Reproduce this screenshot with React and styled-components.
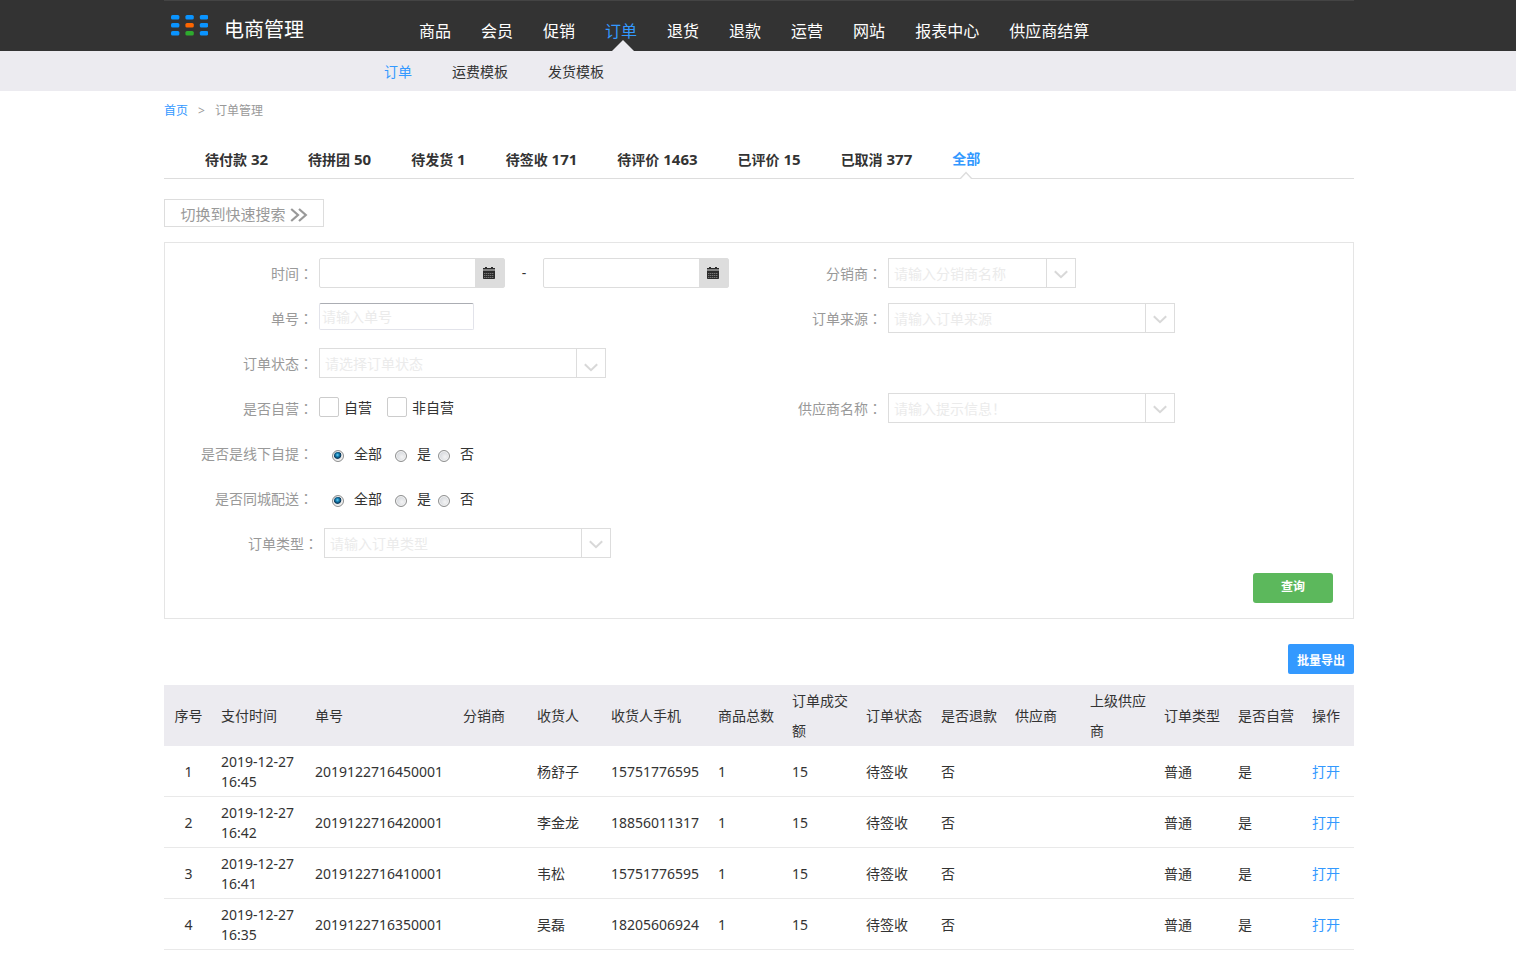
import React from "react";
import styled, { createGlobalStyle } from "styled-components";

const BLUE = "#3399ff";
const LINE = "#dddddd";

const GlobalStyle = createGlobalStyle`
  * { box-sizing: border-box; }
  body {
    margin: 0;
    background: #fff;
    color: #333;
    font-family: "Noto Sans", "Noto Sans CJK SC", sans-serif;
    font-size: 14px;
    line-height: 20px;
  }
  button, input, select { font: inherit; color: inherit; }
  a { color: inherit; text-decoration: none; }
`;

const Container = styled.div`
  max-width: 1192px;
  margin: 0 auto;
  padding-left: 2px;
`;

const Header = styled.header`
  background: #333;
  color: #fff;
`;

const HeaderInner = styled.div`
  display: flex;
  height: 51px;
  border-top: 1px solid #444;
`;

const Brand = styled.a`
  display: flex;
  width: 255px;
  padding: 13px 0 0 7px;
  gap: 16px;
`;

const BrandName = styled.span`
  font-size: 20px;
  line-height: 32px;
`;

const MainNav = styled.nav`
  display: flex;
  gap: 30px;
  font-size: 16px;
  line-height: 60px;
`;

const MainLink = styled.a`
  position: relative;
  height: 50px;
  white-space: nowrap;
  color: ${(p) => (p.$active ? BLUE : "#fff")};

  &::after {
    content: "";
    display: ${(p) => (p.$active ? "block" : "none")};
    position: absolute;
    bottom: 0;
    left: 7px;
    border: 11px solid transparent;
    border-top: 0;
    border-bottom-color: #ecebf0;
  }
`;

const SubBar = styled.div`
  background: #ecebf0;
`;

const SubNav = styled.nav`
  display: flex;
  gap: 40px;
  height: 40px;
  padding-left: 220px;
  line-height: 42px;
`;

const SubLink = styled.a`
  color: ${(p) => (p.$active ? BLUE : "inherit")};
`;

const Breadcrumb = styled.nav`
  display: flex;
  gap: 10px;
  height: 40px;
  font-size: 12px;
  line-height: 40px;
  color: #999;

  a { color: ${BLUE}; }
`;

const Tabs = styled.nav`
  display: flex;
  gap: 40px;
  height: 48px;
  padding-left: 41px;
  border-bottom: 1px solid ${LINE};
  font-weight: bold;
  line-height: 56px;
`;

const Tab = styled.a`
  position: relative;
  height: 48px;
  white-space: pre;
  color: ${(p) => (p.$active ? BLUE : "inherit")};

  svg {
    position: absolute;
    left: 7px;
    bottom: 0;
  }
`;

const Count = styled.span`
  font-size: 15px;
`;

const SwitchButton = styled.button`
  display: flex;
  align-items: center;
  justify-content: center;
  gap: 4px;
  width: 160px;
  height: 28px;
  margin: 20px 0 15px;
  padding: 2px 0 0;
  border: 1px solid ${LINE};
  background: #fff;
  color: #999;
  font-size: 15px;
`;

const SearchForm = styled.form`
  display: grid;
  grid-template-columns: 1fr 1fr;
  grid-auto-rows: 30px;
  row-gap: 15px;
  padding: 15px 0;
  border: 1px solid #e5e5e5;
`;

const Field = styled.div`
  grid-column: ${(p) => p.$col || 1};
  grid-row: ${(p) => p.$row};
  display: flex;
  align-items: flex-start;
  gap: 6px;
  padding-left: ${(p) => (p.$indent ? 5 : 0)}px;
`;

const Caption = styled.label`
  flex: none;
  width: ${(p) => (p.$col === 2 ? 123 : 148)}px;
  text-align: right;
  line-height: 30px;
  color: #999;
`;

const Colon = styled.span`
  font-family: "Noto Sans CJK TC", sans-serif;
`;

const DateBox = styled.div`
  display: flex;
  width: 186px;
  height: 30px;
  border: 1px solid ${LINE};
  border-radius: 2px;
`;

const BareInput = styled.input`
  flex: 1;
  min-width: 0;
  padding: 2px 5px 0;
  border: 0;
  outline: 0;
  background: transparent;

  &::placeholder { color: #ebebeb; opacity: 1; }
`;

const CalendarButton = styled.button`
  display: flex;
  align-items: center;
  justify-content: center;
  width: 29px;
  padding: 0 1px 0 0;
  border: 0;
  background: ${LINE};
`;

const Dash = styled.span`
  width: 26px;
  text-align: center;
  line-height: 30px;
`;

const NumberInput = styled.input`
  width: 155px;
  height: 27px;
  padding: 0 2px;
  border: 1px solid #e2e3ea;
  border-top-color: #abadb3;
  border-radius: 2px;

  &::placeholder { color: #ebebeb; opacity: 1; }
`;

const ComboBox = styled.div`
  display: flex;
  width: ${(p) => (p.$narrow ? 188 : 287)}px;
  height: 30px;
  border: 1px solid ${LINE};
`;

const ArrowButton = styled.button`
  display: flex;
  align-items: center;
  justify-content: center;
  width: 29px;
  padding: 2px 0 0;
  border: 0;
  border-left: 1px solid ${LINE};
  background: #fff;
`;

const SelectBox = styled.div`
  display: grid;
  width: 287px;
  height: 30px;
  border: 1px solid ${LINE};

  > * { grid-area: 1 / 1; }
`;

const NativeSelect = styled.select`
  appearance: none;
  padding: 2px 35px 0 5px;
  border: 0;
  outline: 0;
  background: #fff;
  color: #ebebeb;
`;

const SelectArrow = styled.span`
  display: flex;
  align-items: center;
  justify-content: center;
  justify-self: end;
  width: 29px;
  padding-top: 8px;
  border-left: 1px solid ${LINE};
  pointer-events: none;
`;

const Choices = styled.div`
  display: flex;
  gap: 15px;
`;

const CheckLabel = styled.label`
  display: flex;
  align-items: center;
  gap: 5px;
  height: 30px;
  line-height: 32px;
`;

const CheckBox = styled.input`
  appearance: none;
  width: 20px;
  height: 20px;
  margin: 0 0 2px;
  border: 1px solid #ccc;
  border-radius: 2px;
  background: #fff;

  &:checked { background: ${BLUE}; }
`;

const RadioGroup = styled.div`
  display: flex;
  gap: 7px;
  padding-left: 13px;
`;

const RadioLabel = styled.label`
  display: flex;
  align-items: center;
  gap: 10px;
  line-height: 32px;

  &:first-child { margin-right: 6px; }
`;

const Radio = styled.input`
  appearance: none;
  width: 12px;
  height: 12px;
  margin: 3px 0 0;
  border: 1px solid #8e8f8f;
  border-radius: 50%;
  background: radial-gradient(circle at 60% 60%, #f4f4f4 0, #d4d7dc 70%);
  box-shadow: inset 0 0 0 1px #f4f4f4;

  &:checked {
    background: radial-gradient(circle at 45% 40%, #6fd0f5 0, #1583b5 20%, #0b3557 42%, #e4e4e4 52%);
  }
`;

const QueryButton = styled.button`
  grid-column: 2;
  grid-row: 8;
  justify-self: end;
  width: 80px;
  margin-right: 20px;
  padding: 0 0 2px;
  border: 0;
  border-radius: 3px;
  background: #5cb85c;
  color: #fff;
  font-size: 12px;
  font-weight: bold;
`;

const Actions = styled.div`
  display: flex;
  justify-content: flex-end;
  padding: 25px 0 11px;
`;

const ExportButton = styled.button`
  width: 66px;
  height: 30px;
  padding: 4px 0 0;
  border: 0;
  border-radius: 2px;
  background: ${BLUE};
  color: #fff;
  font-size: 12px;
  font-weight: bold;
`;

const OrderTable = styled.table`
  width: 100%;
  table-layout: fixed;
  border-collapse: separate;
  border-spacing: 0;
`;

const HeadCell = styled.th`
  width: ${(p) => p.$width}px;
  height: 61px;
  padding: 0 8px;
  background: #ecebf0;
  font-weight: normal;
  line-height: 30px;
  text-align: ${(p) => (p.$center ? "center" : "left")};
`;

const Cell = styled.td`
  padding: 6px 8px 4px;
  border-bottom: 1px solid #e9e9e9;
  text-align: ${(p) => (p.$center ? "center" : "left")};
`;

const OpenLink = styled.a`
  color: ${BLUE};
`;

function Logo() {
  const fills = [BLUE, BLUE, BLUE, BLUE, "#ff6600", BLUE, BLUE, "#2eaa2e", BLUE];
  return (
    <svg width="37" height="22" viewBox="0 0 37 22" aria-hidden="true">
      {fills.map((fill, i) => (
        <rect
          key={i}
          x={(i % 3) * 14.4}
          y={0.9 + Math.floor(i / 3) * 8}
          width="8.4"
          height="4.6"
          rx="1.6"
          fill={fill === BLUE ? "#0a94ff" : fill}
        />
      ))}
    </svg>
  );
}

function Chevron() {
  return (
    <svg width="14" height="9" viewBox="0 0 14 9" fill="none" stroke="#d8d8d8" strokeWidth="2" aria-hidden="true">
      <path d="M0.8 1.2 L7 7.2 L13.2 1.2" />
    </svg>
  );
}

function DoubleChevron() {
  return (
    <svg width="18" height="16" viewBox="0 0 18 16" fill="none" stroke="#999" strokeWidth="2.2" aria-hidden="true">
      <path d="M1.2 3 L8 9 L1.2 15 M9 3 L15.8 9 L9 15" />
    </svg>
  );
}

function CalendarIcon() {
  return (
    <svg width="12" height="12" viewBox="0 0 12 12" aria-hidden="true">
      <path fill="#2b2b2b" d="M0 1h2V0h2v1h4V0h2v1h2v1.6H0z M0 3.6h12v7.6q0 .8-.8.8H.8Q0 12 0 11.2z" />
      <path stroke="#8a8a8a" strokeWidth="0.8" strokeDasharray="1.4 0.6" d="M1 6.5h10M1 8.5h10M1 10.5h10" />
    </svg>
  );
}

function Label({ htmlFor, as, id, col, children }) {
  return (
    <Caption as={as} id={id} htmlFor={htmlFor} $col={col}>
      {children}
      <Colon>：</Colon>
    </Caption>
  );
}

function DateField({ label, id }) {
  return (
    <DateBox>
      <BareInput id={id} aria-label={label} />
      <CalendarButton type="button" aria-label="日历">
        <CalendarIcon />
      </CalendarButton>
    </DateBox>
  );
}

function ComboField({ label, id, placeholder, row, col, narrow, indent }) {
  return (
    <Field $row={row} $col={col} $indent={indent}>
      <Label htmlFor={id} col={col}>{label}</Label>
      <ComboBox $narrow={narrow}>
        <BareInput id={id} placeholder={placeholder} />
        <ArrowButton type="button" aria-label={label}>
          <Chevron />
        </ArrowButton>
      </ComboBox>
    </Field>
  );
}

function RadioField({ label, name, row }) {
  return (
    <Field $row={row}>
      <Label as="span" id={`${name}-label`}>{label}</Label>
      <RadioGroup role="radiogroup" aria-labelledby={`${name}-label`}>
        {["全部", "是", "否"].map((option, i) => (
          <RadioLabel key={option}>
            <Radio type="radio" name={name} defaultChecked={i === 0} />
            {option}
          </RadioLabel>
        ))}
      </RadioGroup>
    </Field>
  );
}

const mainLinks = ["商品", "会员", "促销", "订单", "退货", "退款", "运营", "网站", "报表中心", "供应商结算"];
const subLinks = ["订单", "运费模板", "发货模板"];
const tabs = [
  ["待付款", 32],
  ["待拼团", 50],
  ["待发货", 1],
  ["待签收", 171],
  ["待评价", 1463],
  ["已评价", 15],
  ["已取消", 377],
  ["全部"],
];
const columns = [
  ["序号", 49],
  ["支付时间", 94],
  ["单号", 148],
  ["分销商", 74],
  ["收货人", 74],
  ["收货人手机", 107],
  ["商品总数", 74],
  ["订单成交额", 74],
  ["订单状态", 75],
  ["是否退款", 74],
  ["供应商", 75],
  ["上级供应商", 74],
  ["订单类型", 74],
  ["是否自营", 74],
  ["操作", 50],
];
const orders = [
  ["2019-12-27 16:45", "2019122716450001", "杨舒子", "15751776595"],
  ["2019-12-27 16:42", "2019122716420001", "李金龙", "18856011317"],
  ["2019-12-27 16:41", "2019122716410001", "韦松", "15751776595"],
  ["2019-12-27 16:35", "2019122716350001", "吴磊", "18205606924"],
];

export default function App() {
  return (
    <>
      <GlobalStyle />
      <Header>
        <Container>
          <HeaderInner>
            <Brand href="#">
              <Logo />
              <BrandName>电商管理</BrandName>
            </Brand>
            <MainNav>
              {mainLinks.map((text) => (
                <MainLink key={text} href="#" $active={text === "订单"}>{text}</MainLink>
              ))}
            </MainNav>
          </HeaderInner>
        </Container>
      </Header>
      <SubBar>
        <Container>
          <SubNav>
            {subLinks.map((text) => (
              <SubLink key={text} href="#" $active={text === "订单"}>{text}</SubLink>
            ))}
          </SubNav>
        </Container>
      </SubBar>
      <Container as="main">
        <Breadcrumb>
          <a href="#">首页</a>
          <span>&gt;</span>
          <span>订单管理</span>
        </Breadcrumb>
        <Tabs>
          {tabs.map(([text, count]) => (
            <Tab key={text} href="#" $active={count === undefined}>
              {text}
              {count === undefined ? (
                <svg width="14" height="8" viewBox="0 0 14 8" aria-hidden="true">
                  <path d="M1 8 L7 1.5 L13 8" fill="#fff" stroke={LINE} strokeWidth="1.4" />
                </svg>
              ) : (
                <Count> {count}</Count>
              )}
            </Tab>
          ))}
        </Tabs>
        <SwitchButton type="button">
          切换到快速搜索
          <DoubleChevron />
        </SwitchButton>
        <SearchForm onSubmit={(e) => e.preventDefault()}>
          <Field $row={1}>
            <Label htmlFor="start">时间</Label>
            <DateField id="start" label="开始时间" />
            <Dash>-</Dash>
            <DateField id="end" label="结束时间" />
          </Field>
          <ComboField row={1} col={2} narrow id="dealer" label="分销商" placeholder="请输入分销商名称" />
          <Field $row={2}>
            <Label htmlFor="number">单号</Label>
            <NumberInput id="number" placeholder="请输入单号" />
          </Field>
          <ComboField row={2} col={2} id="source" label="订单来源" placeholder="请输入订单来源" />
          <Field $row={3}>
            <Label htmlFor="status">订单状态</Label>
            <SelectBox>
              <NativeSelect id="status" defaultValue="">
                <option value="">请选择订单状态</option>
                <option>待付款</option>
                <option>待发货</option>
                <option>待签收</option>
              </NativeSelect>
              <SelectArrow>
                <Chevron />
              </SelectArrow>
            </SelectBox>
          </Field>
          <Field $row={4}>
            <Label as="span">是否自营</Label>
            <Choices>
              {["自营", "非自营"].map((text) => (
                <CheckLabel key={text}>
                  <CheckBox type="checkbox" />
                  {text}
                </CheckLabel>
              ))}
            </Choices>
          </Field>
          <ComboField row={4} col={2} id="supplier" label="供应商名称" placeholder="请输入提示信息！" />
          <RadioField row={5} name="pickup" label="是否是线下自提" />
          <RadioField row={6} name="local" label="是否同城配送" />
          <ComboField row={7} indent id="type" label="订单类型" placeholder="请输入订单类型" />
          <QueryButton type="submit">查询</QueryButton>
        </SearchForm>
        <Actions>
          <ExportButton type="button">批量导出</ExportButton>
        </Actions>
        <OrderTable>
          <thead>
            <tr>
              {columns.map(([text, width], i) => (
                <HeadCell key={text} $width={width} $center={i === 0}>{text}</HeadCell>
              ))}
            </tr>
          </thead>
          <tbody>
            {orders.map(([time, number, name, phone], i) => (
              <tr key={number}>
                <Cell $center>{i + 1}</Cell>
                <Cell>{time}</Cell>
                <Cell>{number}</Cell>
                <Cell />
                <Cell>{name}</Cell>
                <Cell>{phone}</Cell>
                <Cell>1</Cell>
                <Cell>15</Cell>
                <Cell>待签收</Cell>
                <Cell>否</Cell>
                <Cell />
                <Cell />
                <Cell>普通</Cell>
                <Cell>是</Cell>
                <Cell>
                  <OpenLink href="#">打开</OpenLink>
                </Cell>
              </tr>
            ))}
          </tbody>
        </OrderTable>
      </Container>
    </>
  );
}
